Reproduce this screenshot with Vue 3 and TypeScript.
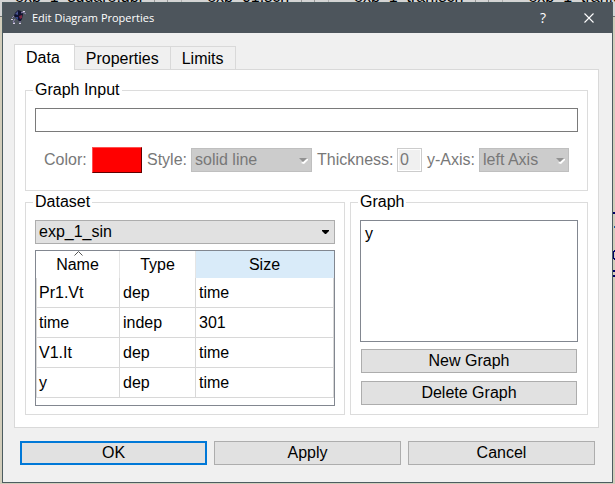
<script setup lang="ts">
import { ref } from 'vue'

interface Variable {
  name: string
  type: string
  size: string
}

const openDocuments: string[] = ['exp_1_square.dpl', 'exp_01.sch', 'exp_1_tran.sch', 'exp_1_tran.dpl']
const tabs: string[] = ['Data', 'Properties', 'Limits']
const variables: Variable[] = [
  { name: 'Pr1.Vt', type: 'dep', size: 'time' },
  { name: 'time', type: 'indep', size: '301' },
  { name: 'V1.It', type: 'dep', size: 'time' },
  { name: 'y', type: 'dep', size: 'time' },
]
const graphs = ref<string[]>(['y'])
const activeTab = ref('Data')
const graphInput = ref('')
const dataset = ref('exp_1_sin')
const lineStyle = ref('solid line')
const thickness = ref('0')
const axis = ref('left Axis')
</script>

<template>
  <div class="desktop">
    <div class="documents">
      <span v-for="doc in openDocuments" :key="doc" class="document">
        <span>{{ doc }}</span><i class="document-close"></i>
      </span>
    </div>
    <div class="stage">
      <div class="edge"></div>
      <main class="window">
        <header class="titlebar">
          <svg class="app-icon" width="16" height="16" viewBox="0 0 16 16" aria-hidden="true">
            <path d="M4 3 7 0 10 1 12 4 11 9 9 12 6 9 3 6Z" fill="#11132f" />
            <path d="M4 4 7 1 7 5Z" fill="#4a5590" />
            <path d="M8 6 11 5 11 8 9 9Z" fill="#7b2742" />
            <path d="M4 7 7 7 7 10Z" fill="#35488e" />
            <path d="M3 6 1 8M10 3 12 2 15 4M4 9 2 12 4 13M9 11 9 13" fill="none" stroke="#8f86b4" stroke-width="1" />
            <path d="M0 9h2v1H0zM2 13h2v1H2zM8 13h2v1H8zM12 1h2v1h-2z" fill="#d6d0df" />
          </svg>
          <h1>Edit Diagram Properties</h1>
          <button class="caption help" type="button" aria-label="Help">?</button>
          <button class="caption" type="button" aria-label="Close">
            <svg width="10" height="10" viewBox="0 0 10 10"><path d="M.5.5l9 9M9.5.5l-9 9" stroke="#fff" stroke-width="1.1" /></svg>
          </button>
        </header>

        <div class="content">
          <div class="tabs" role="tablist">
            <button
              v-for="tab in tabs"
              :key="tab"
              type="button"
              role="tab"
              class="tab"
              :class="{ active: tab === activeTab }"
              :aria-selected="tab === activeTab"
              @click="activeTab = tab"
            >{{ tab }}</button>
          </div>

          <section class="panel">
            <fieldset class="group graph-input">
              <legend>Graph Input</legend>
              <input v-model="graphInput" class="expression" type="text" aria-label="Graph Input">
              <div class="options">
                <label for="color">Color:</label>
                <button id="color" class="swatch" type="button" aria-label="Color"></button>
                <label for="style">Style:</label>
                <div class="combo disabled">
                  <select id="style" v-model="lineStyle" disabled><option>solid line</option></select>
                  <svg class="arrow" width="9" height="6" viewBox="0 0 9 6"><path d="M2 5 8 1H9V2L5 6Z" fill="#fff" /><path d="M0 0h8L4 4Z" fill="#929292" /></svg>
                </div>
                <label for="thickness">Thickness:</label>
                <input id="thickness" v-model="thickness" class="thickness" type="text" disabled>
                <label for="axis">y-Axis:</label>
                <div class="combo disabled">
                  <select id="axis" v-model="axis" disabled><option>left Axis</option></select>
                  <svg class="arrow" width="9" height="6" viewBox="0 0 9 6"><path d="M2 5 8 1H9V2L5 6Z" fill="#fff" /><path d="M0 0h8L4 4Z" fill="#929292" /></svg>
                </div>
              </div>
            </fieldset>

            <div class="columns">
              <fieldset class="group">
                <legend>Dataset</legend>
                <div class="combo">
                  <select v-model="dataset" aria-label="Dataset"><option>exp_1_sin</option></select>
                  <svg class="arrow" width="7" height="4" viewBox="0 0 7 4"><path d="M0 0h7v1L4 4H3L0 1Z" fill="#000" /></svg>
                </div>
                <div class="table-box">
                  <table>
                    <colgroup><col class="col-name"><col class="col-type"><col></colgroup>
                    <thead>
                      <tr>
                        <th scope="col">
                          <svg class="sort" width="9" height="5" viewBox="0 0 9 5"><path d="M.5 4.5l4-4 4 4" fill="none" stroke="#555" /></svg>Name
                        </th>
                        <th scope="col">Type</th>
                        <th scope="col" class="hovered">Size</th>
                      </tr>
                    </thead>
                    <tbody>
                      <tr v-for="item in variables" :key="item.name">
                        <td>{{ item.name }}</td>
                        <td>{{ item.type }}</td>
                        <td>{{ item.size }}</td>
                      </tr>
                    </tbody>
                  </table>
                </div>
              </fieldset>

              <fieldset class="group graph">
                <legend>Graph</legend>
                <ul class="graph-list">
                  <li v-for="graph in graphs" :key="graph">{{ graph }}</li>
                </ul>
                <div class="graph-actions">
                  <button class="push" type="button">New Graph</button>
                  <button class="push" type="button">Delete Graph</button>
                </div>
              </fieldset>
            </div>
          </section>
        </div>

        <footer class="actions">
          <button class="push default" type="button">OK</button>
          <button class="push" type="button">Apply</button>
          <button class="push" type="button">Cancel</button>
        </footer>
      </main>
      <div class="edge right">
        <svg width="2" height="70" viewBox="0 0 2 70" aria-hidden="true">
          <path d="M0 0h2v2H0zM0 39h1v8H0zM1 38h1v2H1zM1 46h1v2H1zM0 58h2v2H0zM0 63h2v2H0z" fill="#000066" />
          <path d="M1 14h1v2H1z" fill="#1f5c9e" />
        </svg>
      </div>
    </div>
  </div>
</template>

<style>
body {
  margin: 0;
}
</style>

<style scoped>
* {
  box-sizing: border-box;
}

.desktop {
  display: flex;
  flex-direction: column;
  min-height: 100vh;
  padding-bottom: 1px;
  background: linear-gradient(#d4d4d4 16px, #707070 16px, #707070 17px, #d2cdbb 17px);
  font: 16px/18px "Liberation Sans", Arial, sans-serif;
  color: #000;
}

button,
input,
select {
  margin: 0;
  font: inherit;
  color: inherit;
}

/* The dialog covers all but the lower edge of the editor's document tabs. */
.documents {
  display: flex;
  align-items: flex-end;
  height: 2px;
  padding-left: 15px;
  overflow: hidden;
}

.document {
  display: flex;
  flex: none;
  align-items: center;
  gap: 12px;
  height: 18px;
  margin-right: 25px;
  margin-bottom: -4px;
  padding-right: 13px;
  border-right: 1px solid #b0b0b0;
}

.document-close {
  width: 14px;
  height: 12px;
  border: 1px solid #999;
}

.stage {
  display: flex;
  flex: 1;
}

.edge {
  flex: none;
  width: 2px;
}

.edge.right {
  padding-top: 210px;
}

.edge svg {
  display: block;
}

.window {
  display: flex;
  flex: 1;
  flex-direction: column;
  min-width: 0;
  border: 1px solid #4c5c60;
  background: #f0f0f0;
}

.titlebar {
  display: flex;
  align-items: center;
  height: 30px;
  padding-left: 8px;
  background: #4d555c;
  color: #fff;
}

.app-icon {
  flex: none;
  margin-right: 5px;
}

h1 {
  flex: 1;
  margin: 0;
  font: 11px/16px "Open Sans", "Noto Sans", sans-serif;
}

.caption {
  display: flex;
  align-items: center;
  justify-content: center;
  width: 46px;
  height: 28px;
  padding: 0;
  border: 0;
  background: none;
}

.help {
  font: 14px/18px "Open Sans", "Noto Sans", sans-serif;
}

.content {
  flex: 1;
  display: flex;
  flex-direction: column;
  padding: 11px 13px 0 11px;
}

.tabs {
  display: flex;
  align-items: flex-end;
  height: 26px;
  margin-bottom: -1px;
}

.tab {
  height: 24px;
  padding: 1px 11px 0;
  border: 1px solid #d9d9d9;
  border-left: 0;
  background: #f0f0f0;
}

.tab.active {
  position: relative;
  height: 26px;
  padding: 0 14px 0 11px;
  border-left: 1px solid #d9d9d9;
  border-bottom: 0;
  background: #fff;
}

.panel {
  display: flex;
  flex: 1;
  flex-direction: column;
  gap: 2px;
  padding: 11px 10px 12px;
  border: 1px solid #d9d9d9;
  background: #fff;
}

.group {
  min-width: 0;
  margin: 0;
  padding: 9px 9px 8px;
  border: 1px solid #dcdcdc;
}

.graph-input {
  padding-bottom: 17px;
}

legend {
  margin-left: -2px;
  padding: 0 2px;
}

.expression {
  display: block;
  width: 100%;
  height: 24px;
  padding: 0 4px;
  border: 1px solid #7a7a7a;
  background: #fff;
}

.options {
  display: grid;
  grid-template-columns: 43px 50px 39px 121fr 75px 25px 47px 90fr;
  align-items: center;
  gap: 5px;
  margin-top: 15px;
  padding: 0 9px;
  color: #787878;
  white-space: nowrap;
}

.swatch {
  height: 26px;
  padding: 0;
  border: 1px solid;
  border-color: #ff5050 #600000 #600000 #ff5050;
  background: #f00;
}

.combo {
  position: relative;
}

.combo select {
  display: block;
  width: 100%;
  height: 24px;
  padding: 0 3px;
  appearance: none;
  border: 1px solid #adadad;
  border-radius: 0;
  background: #e1e1e1;
  opacity: 1;
}

.combo.disabled select {
  border-color: #bfbfbf;
  background: #ccc;
  color: #787878;
}

.arrow {
  position: absolute;
  top: 10px;
  right: 6px;
  pointer-events: none;
}

.disabled .arrow {
  right: 4px;
}

.thickness {
  width: 100%;
  height: 24px;
  padding: 0 2px;
  border: 1px solid #ccc;
  background: #f0f0f0;
  box-shadow: inset 0 0 0 1px #fff;
}

.columns {
  display: grid;
  flex: 1;
  grid-template-columns: 320fr 238fr;
  gap: 5px;
}

.table-box {
  height: 156px;
  margin-top: 6px;
  border: 1px solid #828790;
  background: #fff;
}

table {
  width: 100%;
  table-layout: fixed;
  border-collapse: separate;
  border-spacing: 0;
}

.col-name {
  width: 84px;
}

.col-type {
  width: 76px;
}

th {
  position: relative;
  height: 27px;
  padding: 0;
  border-right: 1px solid #e5e5e5;
  font-weight: 400;
}

th.hovered {
  border-right-color: #d9ebf9;
  background: #d9ebf9;
}

.sort {
  position: absolute;
  top: 0;
  left: 38px;
}

td {
  height: 30px;
  padding: 0 3px;
  border: solid #d8d8d8;
  border-width: 0 1px 1px 0;
}

td:first-child {
  padding-left: 2px;
  border-left-width: 1px;
}

.graph {
  display: flex;
  flex-direction: column;
}

.graph-list {
  height: 122px;
  margin: 0;
  padding: 4px;
  border: 1px solid #828790;
  background: #fff;
  list-style: none;
}

.graph-actions {
  display: grid;
  gap: 8px;
  margin-top: 7px;
  padding: 0 1px;
}

.push {
  height: 24px;
  padding: 0 4px;
  border: 1px solid #adadad;
  background: #e1e1e1;
}

.push.default {
  border: 2px solid #0078d7;
}

.actions {
  display: grid;
  grid-template-columns: repeat(3, 1fr);
  gap: 7px;
  padding: 13px 17px 17px;
}
</style>
